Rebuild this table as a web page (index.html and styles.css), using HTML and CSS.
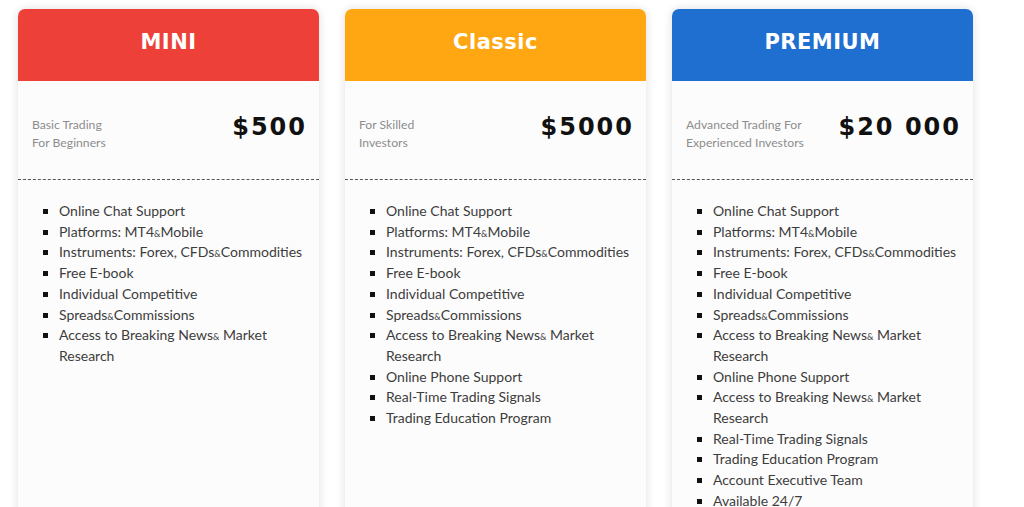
FILE: index.html
```html
<!DOCTYPE html>
<html lang="en">
<head>
<meta charset="utf-8">
<title>Plans</title>
<link rel="stylesheet" href="styles.css">
</head>
<body>
<div class="plans">
  <div class="card">
    <div class="head red">MINI</div>
    <div class="info">
      <div class="sub">Basic Trading<br>For Beginners</div>
      <div class="price">$500</div>
    </div>
    <ul class="features">
      <li>Online Chat Support</li>
      <li>Platforms: MT4<small class="amp">&amp;</small>Mobile</li>
      <li>Instruments: Forex, CFDs<small class="amp">&amp;</small>Commodities</li>
      <li>Free E-book</li>
      <li>Individual Competitive</li>
      <li>Spreads<small class="amp">&amp;</small>Commissions</li>
      <li>Access to Breaking News<small class="amp">&amp;</small> Market Research</li>
    </ul>
  </div>
  <div class="card">
    <div class="head orange">Classic</div>
    <div class="info">
      <div class="sub">For Skilled<br>Investors</div>
      <div class="price">$5000</div>
    </div>
    <ul class="features">
      <li>Online Chat Support</li>
      <li>Platforms: MT4<small class="amp">&amp;</small>Mobile</li>
      <li>Instruments: Forex, CFDs<small class="amp">&amp;</small>Commodities</li>
      <li>Free E-book</li>
      <li>Individual Competitive</li>
      <li>Spreads<small class="amp">&amp;</small>Commissions</li>
      <li>Access to Breaking News<small class="amp">&amp;</small> Market Research</li>
      <li>Online Phone Support</li>
      <li>Real-Time Trading Signals</li>
      <li>Trading Education Program</li>
    </ul>
  </div>
  <div class="card">
    <div class="head blue">PREMIUM</div>
    <div class="info">
      <div class="sub">Advanced Trading For<br>Experienced Investors</div>
      <div class="price">$20 000</div>
    </div>
    <ul class="features">
      <li>Online Chat Support</li>
      <li>Platforms: MT4<small class="amp">&amp;</small>Mobile</li>
      <li>Instruments: Forex, CFDs<small class="amp">&amp;</small>Commodities</li>
      <li>Free E-book</li>
      <li>Individual Competitive</li>
      <li>Spreads<small class="amp">&amp;</small>Commissions</li>
      <li>Access to Breaking News<small class="amp">&amp;</small> Market Research</li>
      <li>Online Phone Support</li>
      <li>Access to Breaking News<small class="amp">&amp;</small> Market Research</li>
      <li>Real-Time Trading Signals</li>
      <li>Trading Education Program</li>
      <li>Account Executive Team</li>
      <li>Available 24/7</li>
    </ul>
  </div>
</div>
</body>
</html>
```
FILE: styles.css
```css
html, body {
  margin: 0;
  padding: 0;
  background: #ffffff;
}
body {
  font-family: "Lato", "Liberation Sans", sans-serif;
  overflow: hidden;
}
.plans {
  display: flex;
  align-items: stretch;
  gap: 26px;
  padding: 9px 0 0 18px;
}
.card {
  width: 301px;
  background: #fcfcfc;
  border-radius: 7px 7px 0 0;
  box-shadow: 0 0 10px rgba(0, 0, 0, 0.13);
  padding-bottom: 40px;
}
.head {
  height: 72px;
  box-sizing: border-box;
  padding-bottom: 6px;
  display: flex;
  align-items: center;
  justify-content: center;
  color: #fff;
  font-family: "DejaVu Sans", sans-serif;
  font-weight: bold;
  font-size: 21px;
  letter-spacing: 0.5px;
  border-radius: 7px 7px 0 0;
}
.red { background: #ed4039; }
.orange { background: #fea712; }
.blue { background: #1f6fd1; }
.info {
  display: flex;
  justify-content: space-between;
  align-items: flex-start;
  height: 99px;
  padding: 35px 14px 0 14px;
  box-sizing: border-box;
  border-bottom: 1px dashed #555;
}
.sub {
  font-size: 12.2px;
  line-height: 18px;
  color: #8d8d8d;
}
.price {
  font-family: "DejaVu Sans", sans-serif;
  font-weight: bold;
  font-size: 24px;
  line-height: 28px;
  letter-spacing: 2px;
  color: #111;
  margin-top: -3px;
  margin-right: -2px;
}
.features {
  list-style: square;
  margin: 0;
  padding: 21px 10px 0 41px;
  font-size: 14px;
  line-height: 20.7px;
  color: #3d3d3d;
}
.features li::marker {
  color: #111;
}
.amp {
  font-size: 9px;
  line-height: 0;
}
```
